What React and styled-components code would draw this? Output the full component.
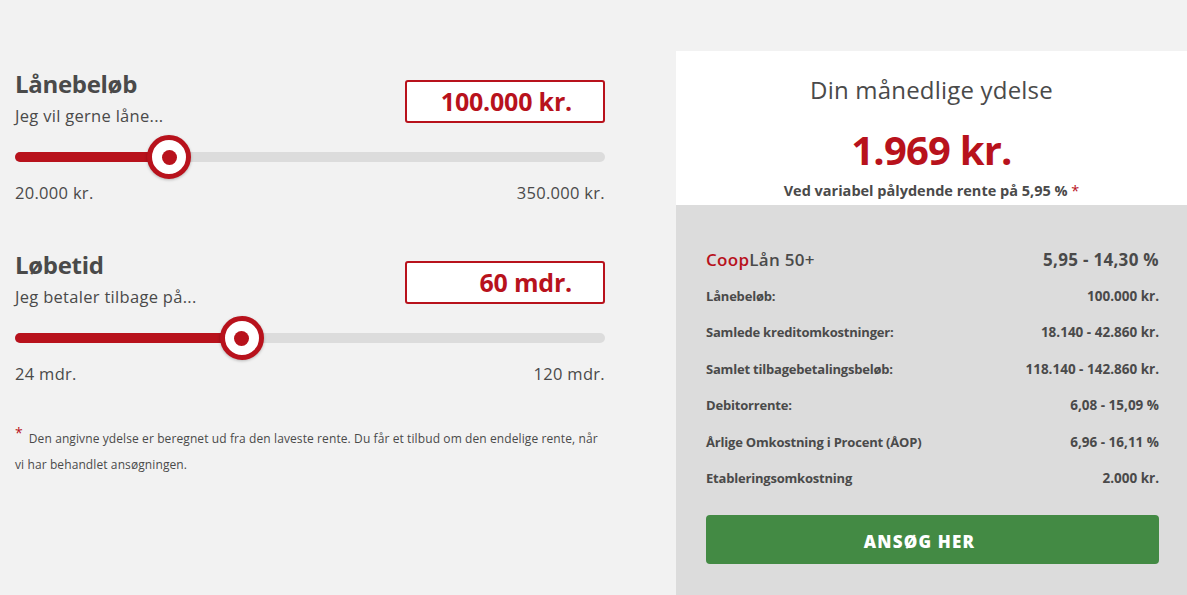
import React from "react";
import styled, { createGlobalStyle } from "styled-components";

const RED = "#b8121c";
const TEXT = "#4a4a4a";

const GlobalStyle = createGlobalStyle`
  html, body {
    margin: 0;
    padding: 0;
    background: #f2f2f2;
    font-family: "Open Sans", Lato, Arial, sans-serif;
    color: ${TEXT};
  }
`;

const Page = styled.div`
  display: flex;
  align-items: flex-start;
  width: 1187px;
  height: 595px;
  overflow: hidden;
`;

const LeftCol = styled.div`
  width: 590px;
  margin-left: 15px;
  padding-top: 70px;
`;

const Section = styled.div`
  margin-bottom: 48px;
`;

const Header = styled.div`
  display: flex;
  justify-content: space-between;
  align-items: flex-start;
`;

const Title = styled.div`
  font-size: 24px;
  font-weight: 700;
  line-height: 28px;
  letter-spacing: -0.3px;
`;

const Subtitle = styled.div`
  font-size: 16.5px;
  line-height: 20px;
  margin-top: 8px;
  letter-spacing: 0.3px;
`;

const ValueBox = styled.div`
  box-sizing: border-box;
  width: 200px;
  height: 43px;
  margin-top: 10px;
  border: 2px solid ${RED};
  border-radius: 3px;
  background: #fff;
  color: ${RED};
  font-size: 25px;
  font-weight: 700;
  text-align: right;
  padding-right: 31px;
  line-height: 39px;
  letter-spacing: -0.2px;
`;

const SliderWrap = styled.div`
  position: relative;
  height: 44px;
  margin-top: 9px;
`;

const Track = styled.div`
  position: absolute;
  left: 0;
  right: 0;
  top: 17px;
  height: 10px;
  border-radius: 5px;
  background: #dcdcdc;
`;

const Fill = styled.div`
  height: 100%;
  border-radius: 5px;
  background: ${RED};
`;

const Thumb = styled.div`
  position: absolute;
  top: 0;
  box-sizing: border-box;
  width: 44px;
  height: 44px;
  border-radius: 50%;
  border: 5px solid ${RED};
  background: #fff;
  box-shadow: 0 1px 3px rgba(0, 0, 0, 0.25);
  display: flex;
  align-items: center;
  justify-content: center;

  &::after {
    content: "";
    width: 15px;
    height: 15px;
    border-radius: 50%;
    background: ${RED};
  }
`;

const Range = styled.div`
  display: flex;
  justify-content: space-between;
  margin-top: 4px;
  font-size: 16.5px;
  line-height: 20px;
  letter-spacing: 0.3px;
`;

const Footnote = styled.p`
  margin: -6px 0 0;
  font-size: 12px;
  line-height: 26px;
  letter-spacing: 0.1px;
  color: ${TEXT};
`;

const Star = styled.span`
  color: ${RED};
  font-size: 14px;
  line-height: 0;
  vertical-align: 5px;
  margin-right: 6px;
`;

const RightCol = styled.div`
  flex: 1;
  margin-left: 71px;
  margin-top: 51px;
  align-self: stretch;
  display: flex;
  flex-direction: column;
`;

const Summary = styled.div`
  background: #fff;
  text-align: center;
  padding: 25px 0 5px;
`;

const SummaryHeading = styled.div`
  font-size: 24px;
  line-height: 28px;
  font-weight: 400;
  letter-spacing: 0.2px;
`;

const Amount = styled.div`
  margin-top: 22px;
  font-size: 40px;
  line-height: 48px;
  font-weight: 700;
  color: ${RED};
  letter-spacing: -0.8px;
`;

const RateNote = styled.div`
  margin-top: 8px;
  font-size: 14.5px;
  line-height: 18px;
  font-weight: 700;

  span {
    color: ${RED};
    font-weight: 400;
  }
`;

const Details = styled.div`
  flex: 1;
  background: #dcdcdc;
  padding: 36px 28px 0 30px;
`;

const Row = styled.div`
  display: flex;
  justify-content: space-between;
  align-items: center;
  height: 36.5px;
  font-size: ${(p) => (p.big ? "17px" : "13px")};
  font-weight: 700;
  letter-spacing: ${(p) => (p.big ? "0.3px" : "-0.2px")};
`;

const Value = styled.span`
  font-size: ${(p) => (p.big ? "17px" : "13.5px")};
  letter-spacing: ${(p) => (p.big ? "0.3px" : "0")};
`;

const Brand = styled.span`
  font-weight: 600;
  em {
    font-style: normal;
    color: ${RED};
  }
`;

const ApplyButton = styled.button`
  display: block;
  width: 100%;
  height: 49px;
  margin-top: 18px;
  padding: 4px 26px 0 0;
  border: none;
  border-radius: 4px;
  background: #438a44;
  color: #fff;
  font-family: inherit;
  font-size: 17px;
  font-weight: 800;
  letter-spacing: 1.2px;
  cursor: pointer;
`;

function Slider({ value, min, max }) {
  const t = (value - min) / (max - min);
  const thumbLeft = t * (590 - 44);
  return (
    <SliderWrap>
      <Track>
        <Fill style={{ width: thumbLeft + 22 }} />
      </Track>
      <Thumb style={{ left: thumbLeft }} />
    </SliderWrap>
  );
}

function LoanSection({ title, subtitle, display, value, min, max, minLabel, maxLabel }) {
  return (
    <Section>
      <Header>
        <div>
          <Title>{title}</Title>
          <Subtitle>{subtitle}</Subtitle>
        </div>
        <ValueBox>{display}</ValueBox>
      </Header>
      <Slider value={value} min={min} max={max} />
      <Range>
        <span>{minLabel}</span>
        <span>{maxLabel}</span>
      </Range>
    </Section>
  );
}

const rows = [
  ["Lånebeløb:", "100.000 kr."],
  ["Samlede kreditomkostninger:", "18.140 - 42.860 kr."],
  ["Samlet tilbagebetalingsbeløb:", "118.140 - 142.860 kr."],
  ["Debitorrente:", "6,08 - 15,09 %"],
  ["Årlige Omkostning i Procent (ÅOP)", "6,96 - 16,11 %"],
  ["Etableringsomkostning", "2.000 kr."],
];

export default function App() {
  return (
    <>
      <GlobalStyle />
      <Page>
        <LeftCol>
          <LoanSection
            title="Lånebeløb"
            subtitle="Jeg vil gerne låne..."
            display="100.000 kr."
            value={100000}
            min={20000}
            max={350000}
            minLabel="20.000 kr."
            maxLabel="350.000 kr."
          />
          <LoanSection
            title="Løbetid"
            subtitle="Jeg betaler tilbage på..."
            display="60 mdr."
            value={60}
            min={24}
            max={120}
            minLabel="24 mdr."
            maxLabel="120 mdr."
          />
          <Footnote>
            <Star>*</Star>
            Den angivne ydelse er beregnet ud fra den laveste rente. Du får et tilbud om den endelige rente, når vi har behandlet ansøgningen.
          </Footnote>
        </LeftCol>
        <RightCol>
          <Summary>
            <SummaryHeading>Din månedlige ydelse</SummaryHeading>
            <Amount>1.969 kr.</Amount>
            <RateNote>
              Ved variabel pålydende rente på 5,95 % <span>*</span>
            </RateNote>
          </Summary>
          <Details>
            <Row big>
              <Brand>
                <em>Coop</em>Lån 50+
              </Brand>
              <Value big>5,95 - 14,30 %</Value>
            </Row>
            {rows.map(([label, val]) => (
              <Row key={label}>
                <span>{label}</span>
                <Value>{val}</Value>
              </Row>
            ))}
            <ApplyButton>ANSØG HER</ApplyButton>
          </Details>
        </RightCol>
      </Page>
    </>
  );
}
